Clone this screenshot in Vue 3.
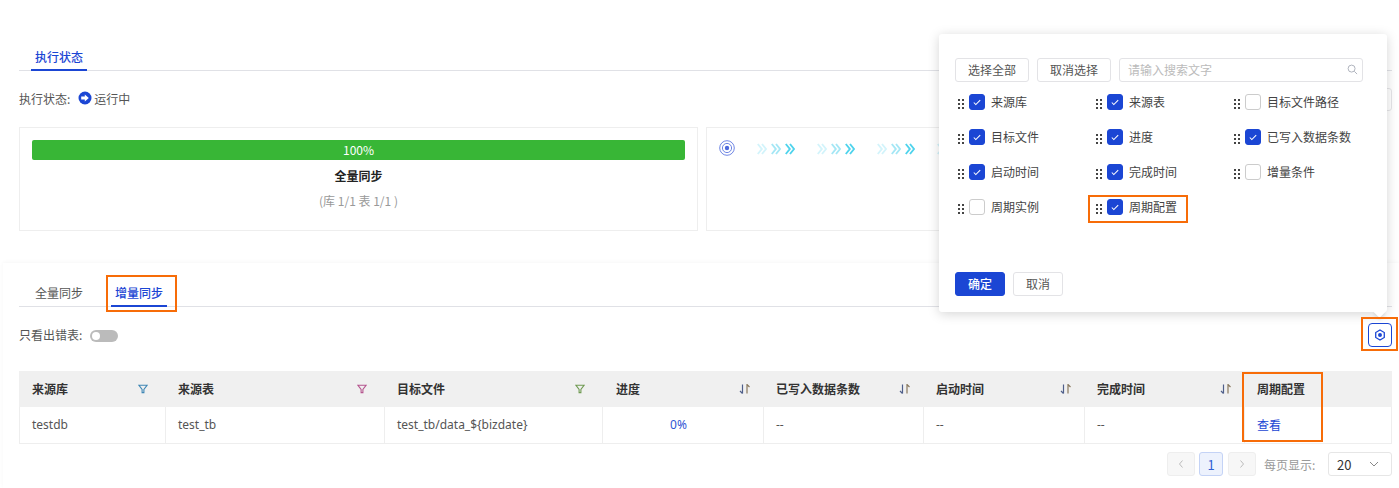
<script setup>
const options = [
  { label: '来源库', on: true }, { label: '来源表', on: true }, { label: '目标文件路径', on: false },
  { label: '目标文件', on: true }, { label: '进度', on: true }, { label: '已写入数据条数', on: true },
  { label: '启动时间', on: true }, { label: '完成时间', on: true }, { label: '增量条件', on: false },
  { label: '周期实例', on: false }, { label: '周期配置', on: true, mark: true },
]
const columns = [
  { label: '来源库', w: 146, icon: 'filter', color: '#3f87b5' },
  { label: '来源表', w: 219, icon: 'filter', color: '#b5568f' },
  { label: '目标文件', w: 218, icon: 'filter', color: '#6f9a52' },
  { label: '进度', w: 161, icon: 'sort' },
  { label: '已写入数据条数', w: 160, icon: 'sort' },
  { label: '启动时间', w: 161, icon: 'sort' },
  { label: '完成时间', w: 160, icon: 'sort' },
  { label: '周期配置', w: 148 },
]
const cells = ['testdb', 'test_tb', 'test_tb/data_${bizdate}', '0%', '--', '--', '--', '查看']
const arrows = [0, 1, 2, 3]
</script>

<template>
  <div class="page">
    <section class="top">
      <div class="tabs tabs-a">
        <span class="tab active">执行状态</span>
      </div>
      <div class="status">
        <span>执行状态:</span>
        <svg class="run" viewBox="0 0 14 14" width="14" height="14">
          <circle cx="7" cy="7" r="6.5" fill="#1b46d4" />
          <path d="M3.2 5.6h3.6V3.6L10.8 7 6.8 10.4V8.4H3.2z" fill="#fff" />
        </svg>
        <span>运行中</span>
        <span class="behind"></span>
      </div>
      <div class="cards">
        <div class="card card-left">
          <div class="bar">100%</div>
          <div class="card-title">全量同步</div>
          <div class="card-sub">(库 1/1 表 1/1 )</div>
        </div>
        <div class="card card-right">
          <svg class="target" viewBox="0 0 16 16" width="16" height="16">
            <circle cx="8" cy="8" r="7.3" fill="none" stroke="#6f86e4" stroke-width="1" />
            <circle cx="8" cy="8" r="4.6" fill="none" stroke="#6f86e4" stroke-width="1" />
            <circle cx="8" cy="8" r="2.2" fill="#4d69dc" />
          </svg>
          <div v-for="a in arrows" :key="a" class="chev-group">
            <svg viewBox="0 0 10 12" width="10" height="12" class="c1"><path d="M.8 1l4 5-4 5M5 1l4 5-4 5" /></svg>
            <svg viewBox="0 0 10 12" width="10" height="12" class="c2"><path d="M.8 1l4 5-4 5M5 1l4 5-4 5" /></svg>
            <svg viewBox="0 0 10 12" width="10" height="12" class="c3"><path d="M.8 1l4 5-4 5M5 1l4 5-4 5" /></svg>
          </div>
        </div>
      </div>
    </section>

    <section class="bottom">
      <div class="tabs tabs-b">
        <span class="tab">全量同步</span>
        <span class="tab active mid">增量同步</span>
      </div>
      <div class="filter-row">
        <div class="only-err">
          <span class="err-label">只看出错表:</span>
          <span class="switch"><i></i></span>
        </div>
        <button class="gear" type="button">
          <svg viewBox="0 0 14 14" width="12" height="12">
            <path d="M7 1.2l5 2.9v5.8l-5 2.9-5-2.9V4.100z" fill="none" stroke="#1b46d4" stroke-width="1.500" />
            <circle cx="7" cy="7" r="2.300" fill="#1b46d4" />
          </svg>
        </button>
      </div>
      <div class="table">
        <div class="row head">
          <div v-for="c in columns" :key="c.label" class="cell" :style="{ width: c.w + 'px' }">
            <span class="head-label">{{ c.label }}</span>
            <svg v-if="c.icon === 'filter'" class="ficon" viewBox="0 0 10 10" width="10" height="10">
              <path d="M.8 1.200h8.400L5.900 5.400v3.200H4.100V5.400z" fill="none" :stroke="c.color" stroke-width="1.100" />
            </svg>
            <svg v-if="c.icon === 'sort'" class="sicon" viewBox="0 0 12 10" width="12" height="10">
              <path d="M3.500 .5v9M1 7l2.500 2.500" fill="none" stroke="#4f5f8a" stroke-width="1.200" />
              <path d="M8 9.500V.5l2.500 2.500" fill="none" stroke="#8a7a60" stroke-width="1.200" />
            </svg>
          </div>
        </div>
        <div class="row body">
          <div
            v-for="(c, i) in columns"
            :key="c.label"
            class="cell"
            :class="{ pct: i === 3, link: i === 7 }"
            :style="{ width: c.w + 'px' }"
          >{{ cells[i] }}</div>
        </div>
      </div>
      <div class="pager">
        <span class="pg"><svg viewBox="0 0 8 10" width="8" height="10"><path d="M5.500 1.500L2.500 5l3 3.500" /></svg></span>
        <span class="pg cur">1</span>
        <span class="pg"><svg viewBox="0 0 8 10" width="8" height="10"><path d="M2.500 1.500l3 3.500-3 3.500" /></svg></span>
        <span class="per">每页显示:</span>
        <span class="select">
          <span>20</span>
          <svg viewBox="0 0 10 6" width="10" height="6"><path d="M1 1l4 4 4-4" /></svg>
        </span>
      </div>
    </section>

    <div class="popover">
      <div class="pop-tools">
        <button class="btn tool" type="button">选择全部</button>
        <button class="btn tool" type="button">取消选择</button>
        <div class="search">
          <span>请输入搜索文字</span>
          <svg viewBox="0 0 12 12" width="11" height="11">
            <circle cx="5" cy="5" r="3.800" fill="none" stroke="#a9adb8" stroke-width="1" />
            <path d="M8 8l3 3" stroke="#a9adb8" stroke-width="1" />
          </svg>
        </div>
      </div>
      <div class="opts">
        <div v-for="o in options" :key="o.label" class="opt" :class="{ marked: o.mark }">
          <svg class="grip" viewBox="0 0 6 10" width="6" height="10">
            <g fill="#444">
              <rect x="0" y="0" width="2" height="2" /><rect x="4" y="0" width="2" height="2" />
              <rect x="0" y="4" width="2" height="2" /><rect x="4" y="4" width="2" height="2" />
              <rect x="0" y="8" width="2" height="2" /><rect x="4" y="8" width="2" height="2" />
            </g>
          </svg>
          <span class="box" :class="{ on: o.on }">
            <svg v-if="o.on" viewBox="0 0 10 8" width="8" height="7"><path d="M1 4l2.500 2.500L9 1" /></svg>
          </span>
          <span class="opt-label">{{ o.label }}</span>
        </div>
      </div>
      <div class="pop-foot">
        <button class="btn primary" type="button">确定</button>
        <button class="btn" type="button">取消</button>
      </div>
      <span class="pop-tail"></span>
    </div>

    <span class="hl hl-tab"></span>
    <span class="hl hl-gear"></span>
    <span class="hl hl-col"></span>
  </div>
</template>

<style>
html, body { background: #fff; overflow: hidden; }
</style>

<style scoped>
.page {
  position: relative;
  width: 1399px;
  height: 488px;
  overflow: hidden;
  background: #fff;
  font-family: "Noto Sans CJK SC", "Noto Sans", sans-serif;
  font-size: 12px;
  color: #555;
}
.top { padding: 44px 7px 0 19px; height: 263px; box-sizing: border-box; }
.tabs { display: flex; border-bottom: 1px solid #e0e1e6; height: 27px; box-sizing: border-box; }
.tab {
  padding: 0 4px;
  margin: 0 12px;
  line-height: 26px;
  height: 27px;
  box-sizing: border-box;
  color: #555;
}
.tab.active { color: #1b46d4; font-weight: 500; border-bottom: 2px solid #1b46d4; }
.tabs-b .tab.mid { margin-left: 12px; }
.status { display: flex; align-items: center; height: 24px; margin-top: 16px; }
.status > span:first-child, .status > span:nth-of-type(2) { margin-bottom: 2px; }
.run { margin: 0 2px 2px 8px; }
.behind {
  margin-left: auto;
  width: 80px;
  height: 23px;
  box-sizing: border-box;
  border: 1px solid #e6e6e9;
  border-radius: 3px;
}
.cards { display: flex; gap: 8px; margin-top: 16px; }
.card { border: 1px solid #eeeeee; height: 104px; box-sizing: border-box; }
.card-left { width: 679px; padding: 12px 12px 0; text-align: center; flex: none; }
.bar {
  height: 20px;
  line-height: 20px;
  background: #38b636;
  color: #fff;
  border-radius: 2px;
}
.card-title { margin-top: 7px; line-height: 18px; font-weight: 600; color: #222; }
.card-sub { margin-top: 7px; line-height: 18px; color: #999; }
.card-right {
  width: 670px;
  flex: none;
  overflow: hidden;
  display: flex;
  align-items: flex-start;
  padding: 12px 0 0 12px;
}
.target { flex: none; margin-right: 22px; }
.chev-group { display: flex; flex: none; gap: 4px; margin-top: 3px; margin-right: 22px; }
.chev-group svg { fill: none; stroke-width: 1.900; flex: none; }
.c1 { stroke: #d3f4fb; }
.c2 { stroke: #a5e7f5; }
.c3 { stroke: #4fd3ec; }

.bottom {
  position: relative;
  margin-left: 3px;
  padding: 17px 7px 0 16px;
  box-shadow: 0 -1px 4px rgba(0, 0, 0, .035);
  height: 225px;
  box-sizing: border-box;
}
.filter-row {
  display: flex;
  align-items: center;
  justify-content: space-between;
  height: 24px;
  margin-top: 16px;
}
.only-err { display: flex; align-items: center; gap: 8px; }
.err-label { margin-bottom: 2px; }
.switch {
  display: block;
  width: 28px;
  height: 12px;
  margin-top: 2px;
  border-radius: 6px;
  background: #bbb;
  position: relative;
}
.switch i {
  position: absolute;
  left: 2px;
  top: 2px;
  width: 8px;
  height: 8px;
  border-radius: 50%;
  background: #fff;
}
.gear {
  width: 24px;
  height: 24px;
  padding: 0;
  display: flex;
  align-items: center;
  justify-content: center;
  background: #fff;
  border: 1px solid #1b46d4;
  border-radius: 4px;
}
.table { margin-top: 24px; width: 1373px; }
.row { display: flex; }
.cell {
  flex: none;
  box-sizing: border-box;
  display: flex;
  align-items: center;
  justify-content: space-between;
  padding: 0 12px 0 13px;
}
.head { height: 36px; background: #f0f0f0; }
.head .cell { color: #333; font-weight: 600; }
.head-label { margin-bottom: 2px; }
.head .cell:nth-child(-n+3) { padding-right: 17px; }
.head .cell:nth-child(4) { padding-left: 14px; }
.body { height: 37px; border-bottom: 1px solid #eeeeee; box-sizing: border-box; }
.body .cell {
  border-left: 1px solid #eeeeee;
  padding-left: 12px;
  padding-bottom: 2px;
  color: #555;
  font-family: "Noto Sans", "Noto Sans CJK SC", sans-serif;
}
.body .cell:last-child { border-right: 1px solid #eeeeee; }
.body .cell.pct { justify-content: center; color: #2f55d4; padding-left: 12px; padding-right: 21px; }
.body .cell.link { color: #1b46d4; font-family: "Noto Sans CJK SC", sans-serif; }
.pager {
  display: flex;
  justify-content: flex-end;
  align-items: center;
  margin-top: 8px;
  width: 1373px;
}
.pg {
  width: 28px;
  height: 24px;
  box-sizing: border-box;
  border: 1px solid #eeeeee;
  background: #f7f7f7;
  border-radius: 3px;
  display: flex;
  align-items: center;
  justify-content: center;
  color: #2f5fd4;
  font-size: 13px;
}
.pg svg { fill: none; stroke: #bbb; stroke-width: 1; }
.pg.cur { width: 24px; margin: 0 5px 0 4px; background: #edf2fd; border-color: #c4d3f6; }
.per { color: #999; margin: 0 11px 0 8px; width: 53px; white-space: nowrap; }
.select {
  width: 64px;
  height: 24px;
  box-sizing: border-box;
  border: 1px solid #e6e6e6;
  border-radius: 3px;
  display: flex;
  align-items: center;
  justify-content: space-between;
  padding: 0 12px 0 8px;
  color: #333;
  font-size: 13px;
}
.select svg { fill: none; stroke: #888; stroke-width: 1; }

.popover {
  position: absolute;
  left: 939px;
  top: 34px;
  width: 448px;
  height: 278px;
  box-sizing: border-box;
  padding: 24px 24px 0 16px;
  background: #fff;
  border-radius: 3px;
  box-shadow: 0 2px 12px rgba(0, 0, 0, .17);
}
.pop-tools { display: flex; gap: 8px; }
.btn {
  height: 24px;
  padding: 0 8px 2px;
  box-sizing: border-box;
  background: #fff;
  border: 1px solid #e3e3e6;
  border-radius: 3px;
  font: inherit;
  color: #555;
}
.btn.tool { width: 74px; padding-left: 0; padding-right: 0; }
.search {
  flex: 1;
  height: 24px;
  box-sizing: border-box;
  border: 1px solid #e3e3e6;
  border-radius: 3px;
  display: flex;
  align-items: center;
  justify-content: space-between;
  padding: 0 4px 2px 8px;
  color: #bbb;
}
.opts {
  display: grid;
  grid-template-columns: 138px 138px 1fr;
  grid-auto-rows: 35px;
  margin-top: 4px;
}
.opt { display: flex; align-items: center; height: 32px; color: #444; }
.opt-label { margin-bottom: 2px; }
.grip { margin: 4px 5px 0 3px; flex: none; }
.box {
  width: 16px;
  height: 16px;
  box-sizing: border-box;
  border: 1px solid #ccc;
  border-radius: 3px;
  margin-right: 6px;
  display: flex;
  align-items: center;
  justify-content: center;
  flex: none;
}
.box.on { background: #1b46d4; border-color: #1b46d4; }
.box svg { fill: none; stroke: #fff; stroke-width: 1.300; }
.pop-foot { display: flex; gap: 8px; position: absolute; left: 16px; top: 238px; }
.btn.primary { background: #1b46d4; border-color: #1b46d4; color: #fff; font-weight: 500; }
.pop-foot .btn { width: 50px; padding: 0 0 2px; }
.pop-tail {
  position: absolute;
  right: 3px;
  bottom: -4px;
  width: 9px;
  height: 9px;
  background: #fff;
  transform: rotate(45deg);
  box-shadow: 2px 2px 3px rgba(0, 0, 0, .08);
}
.hl { position: absolute; border: 2px solid #f76c08; box-sizing: border-box; pointer-events: none; }
.hl-tab { left: 106px; top: 275px; width: 71px; height: 37px; }
.hl-gear { left: 1361px; top: 317px; width: 37px; height: 34px; }
.hl-col { left: 1242px; top: 372px; width: 81px; height: 70px; }
.opt.marked { position: relative; }
.opt.marked::after {
  content: "";
  position: absolute;
  left: -5px;
  top: 4px;
  width: 100px;
  height: 28px;
  border: 2px solid #f76c08;
  box-sizing: border-box;
}
</style>
